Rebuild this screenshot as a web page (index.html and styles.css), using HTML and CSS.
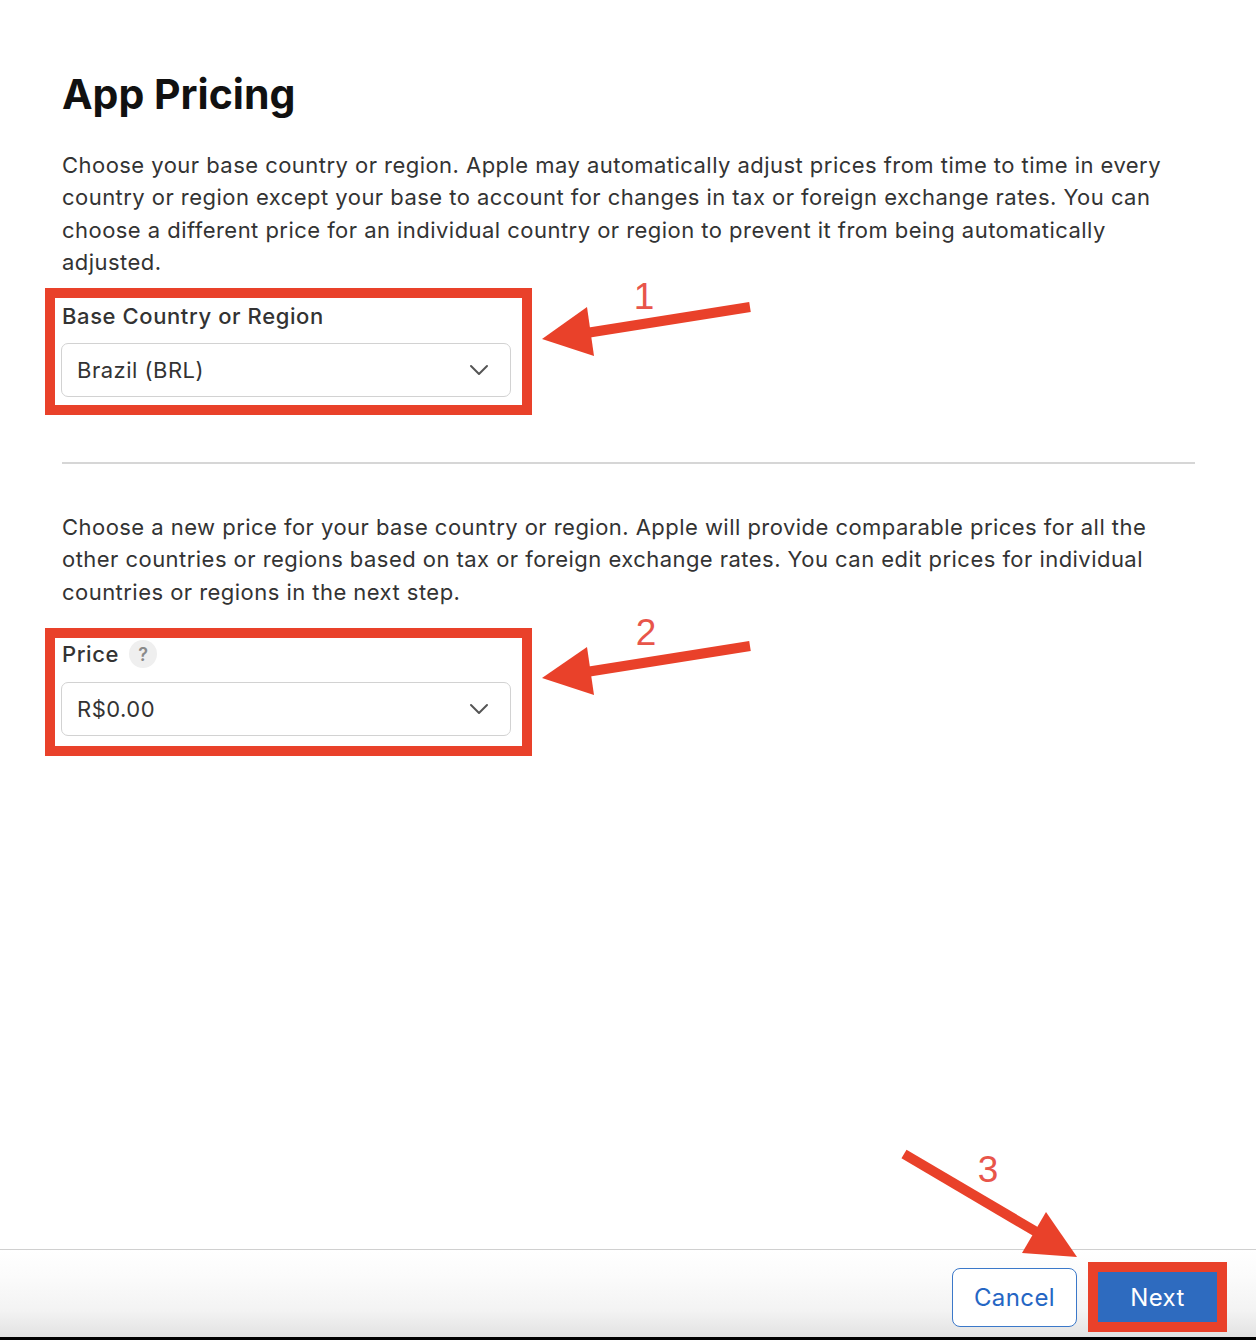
FILE: index.html
```html
<!DOCTYPE html>
<html lang="en">
<head>
<meta charset="utf-8">
<title>App Pricing</title>
<link rel="stylesheet" href="styles.css">
</head>
<body>
<div class="page">
  <main class="main">
    <h1 class="title">App Pricing</h1>
    <p class="desc desc-first">Choose your base country or region. Apple may automatically adjust prices from time to time in every country or region except your base to account for changes in tax or foreign exchange rates. You can choose a different price for an individual country or region to prevent it from being automatically adjusted.</p>
    <div class="field field-first">
      <div class="label-row"><span class="label">Base Country or Region</span></div>
      <div class="select">
        <span class="select-value">Brazil (BRL)</span>
        <svg class="chevron" width="20" height="12" viewBox="0 0 20 12"><path d="M2 2 L10 10 L18 2" fill="none" stroke="#555" stroke-width="2" stroke-linecap="round" stroke-linejoin="round"/></svg>
      </div>
    </div>
    <div class="divider"></div>
    <p class="desc desc-second">Choose a new price for your base country or region. Apple will provide comparable prices for all the other countries or regions based on tax or foreign exchange rates. You can edit prices for individual countries or regions in the next step.</p>
    <div class="field field-second">
      <div class="label-row"><span class="label">Price</span><span class="help">?</span></div>
      <div class="select">
        <span class="select-value">R$0.00</span>
        <svg class="chevron" width="20" height="12" viewBox="0 0 20 12"><path d="M2 2 L10 10 L18 2" fill="none" stroke="#555" stroke-width="2" stroke-linecap="round" stroke-linejoin="round"/></svg>
      </div>
    </div>
  </main>
  <footer class="footer">
    <button class="btn btn-cancel">Cancel</button>
    <div class="highlight"><button class="btn btn-next">Next</button></div>
  </footer>
  <svg class="annotations" width="1256" height="1340" viewBox="0 0 1256 1340">
    <line x1="750" y1="307" x2="580" y2="334" stroke="#e9412a" stroke-width="10"/>
    <polygon points="542,339 587,307 594,356" fill="#e9412a"/>
    <text x="644" y="309" class="anno-num" text-anchor="middle">1</text>
    <line x1="750" y1="646" x2="580" y2="673" stroke="#e9412a" stroke-width="10"/>
    <polygon points="542,678 587,647 594,695" fill="#e9412a"/>
    <text x="646" y="645" class="anno-num" text-anchor="middle">2</text>
    <line x1="904" y1="1154" x2="1045" y2="1237" stroke="#e9412a" stroke-width="10"/>
    <polygon points="1077,1257 1046,1212 1022,1253" fill="#e9412a"/>
    <text x="988" y="1182" class="anno-num" text-anchor="middle">3</text>
  </svg>
</div>
</body>
</html>
```

FILE: styles.css
```css
* { box-sizing: border-box; }
html, body { margin: 0; padding: 0; background: #fff; }
body {
  font-family: Inter, "Noto Sans", "Liberation Sans", sans-serif;
  color: #333;
}
.page {
  position: relative;
  width: 1256px;
  height: 1340px;
  display: flex;
  flex-direction: column;
  overflow: hidden;
}
.main {
  flex: 1;
  padding: 0 61px 0 62px;
}
.title {
  margin: 70px 0 0;
  font-size: 41px;
  line-height: 48px;
  font-weight: 700;
  color: #111;
  letter-spacing: 0;
}
.desc {
  margin: 0;
  font-size: 22px;
  line-height: 32.3px;
  color: #333;
  letter-spacing: 0.46px;
}
.desc-first { margin-top: 31px; }
.desc-second { margin-top: 47px; }
.field {
  width: 487px;
  margin-left: -17px;
  border: 10px solid #e9412a;
  padding: 4px 11px 8px 6px;
}
.field-first { margin-top: 10px; }
.field-second { margin-top: 20px; padding-top: 2px; padding-bottom: 10px; }
.field-second .select { margin-top: 14px; }
.label-row {
  display: flex;
  align-items: center;
  height: 28px;
  padding-left: 1px;
}
.label {
  font-size: 22px;
  line-height: 28px;
  font-weight: 500;
  color: #333;
  letter-spacing: 0.6px;
}
.help {
  margin-left: 10px;
  width: 28px;
  height: 28px;
  border-radius: 50%;
  background: #efefef;
  color: #8a8a8a;
  font-size: 18px;
  font-weight: 600;
  display: flex;
  align-items: center;
  justify-content: center;
}
.select {
  margin-top: 13px;
  height: 54px;
  border: 1px solid #d2d2d2;
  border-radius: 7px;
  display: flex;
  align-items: center;
  justify-content: space-between;
  padding: 0 21px 0 15px;
}
.select-value {
  font-size: 22px;
  color: #333;
  letter-spacing: 0.5px;
}
.chevron { display: block; }
.divider {
  margin-top: 47px;
  height: 2px;
  background: #d6d6d6;
}
.footer {
  height: 91px;
  border-top: 1px solid #d0d0d0;
  border-bottom: 3px solid #000;
  background: linear-gradient(#ffffff, #fbfbfb 30%, #f3f3f3 70%, #e2e2e2);
  display: flex;
  justify-content: flex-end;
  align-items: center;
  padding: 7px 29px 0 0;
  gap: 11px;
}
.btn {
  font-family: Inter, "Noto Sans", "Liberation Sans", sans-serif;
  font-size: 24px;
  letter-spacing: 0.4px;
  cursor: pointer;
}
.btn-cancel {
  width: 125px;
  height: 59px;
  border: 1px solid #3b78c9;
  border-radius: 8px;
  background: #fff;
  color: #2566c4;
  padding: 0;
}
.highlight {
  border: 10px solid #e9412a;
  width: 139px;
  height: 70px;
}
.btn-next {
  display: block;
  width: 119px;
  height: 50px;
  border: none;
  background: #2e6bbf;
  color: #fff;
  padding: 0;
}
.annotations {
  position: absolute;
  left: 0;
  top: 0;
  pointer-events: none;
}
.anno-num {
  font-family: "Liberation Sans", Arial, sans-serif;
  font-size: 37px;
  fill: #e8554a;
}
```
